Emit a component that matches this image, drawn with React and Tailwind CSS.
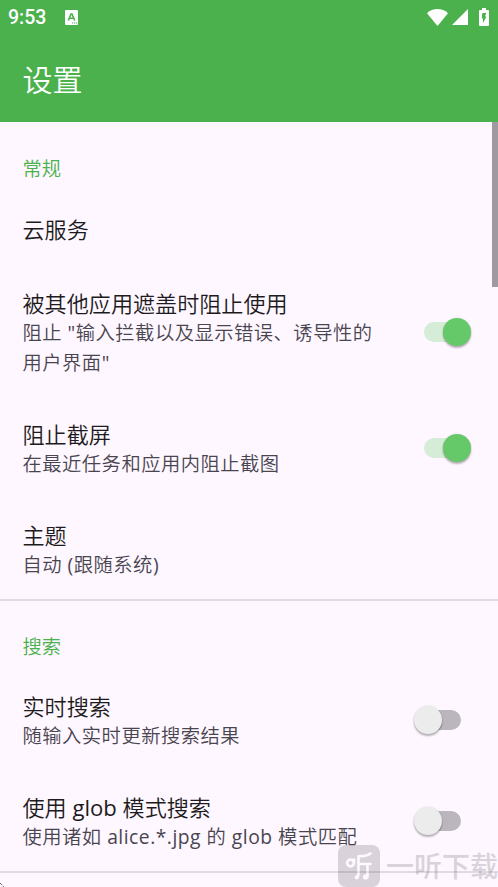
const switchTrackOn = 'bg-[#d5edd7] left-0';
const switchTrackOff = 'bg-[#bbb5bd] right-0';

function Switch({ on }) {
  return (
    <div className={`relative mb-[2px] h-7 w-[47px] shrink-0 ${on ? 'mr-[27px]' : 'mr-[37px]'}`}>
      <div className={`absolute top-1 h-5 w-[37px] rounded-full ${on ? switchTrackOn : switchTrackOff}`} />
      <div
        className={`absolute top-0 size-7 rounded-full shadow-[0_2px_2px_rgba(0,0,0,0.28),0_0_2px_rgba(0,0,0,0.12)] ${
          on ? 'right-0 bg-[#66c969]' : 'left-0 bg-[#ececec]'
        }`}
      />
    </div>
  );
}

// Latin runs take the regular weight beside the slightly lighter Chinese glyphs.
function Mixed({ text }) {
  return text.split(/([\x21-\x7e]+)/).map((part, i) =>
    i % 2 ? (
      <span key={i} className="font-normal">
        {part}
      </span>
    ) : (
      part
    ),
  );
}

function Row({ title, summary, toggle, className = '' }) {
  return (
    <div className={`flex items-center justify-between pl-[22.5px] ${className}`}>
      <div className="whitespace-nowrap">
        <div className="text-[22.1px] leading-[29px] text-[#1d1b20]">
          <Mixed text={title} />
        </div>
        {summary?.map((line, i) => (
          <div
            key={line}
            className={`text-[19.3px] leading-[29px] tracking-[0.5px] text-[#49454f] ${i > 0 ? 'mt-[1px]' : ''}`}
          >
            <Mixed text={line} />
          </div>
        ))}
      </div>
      {toggle !== undefined && <Switch on={toggle} />}
    </div>
  );
}

function Category({ children, className = '' }) {
  return <div className={`pl-[22.5px] text-[19.3px] leading-[28px] text-[#4bb14c] ${className}`}>{children}</div>;
}

function StatusBar() {
  return (
    <div className="flex h-[34px] items-center text-white">
      <span className="ml-[8px] mt-[1px] w-[57px] font-[Roboto] text-[19.5px] font-medium">9:53</span>
      <svg width="13" height="15" viewBox="0 0 13 15">
        <rect width="13" height="15" rx="1" fill="#fff" />
        <path d="M3.300 10.500 6 4h1l2.700 6.500M4.500 8.300h4" fill="none" stroke="#4bb14c" strokeWidth="1.600" />
        <path d="M7 13h1.200M9 13h1.200M11 13h1.200" stroke="#4bb14c" strokeWidth="1" />
      </svg>
      <div className="ml-auto mr-[9px] flex items-center">
        <svg width="21" height="17" viewBox="0 0 21 17">
          <path d="M0 4.2C6-1.4 15-1.4 21 4.2L10.5 17Z" fill="#fff" />
        </svg>
        <svg className="ml-1" width="16" height="16" viewBox="0 0 16 16">
          <path d="M16 0v16H0Z" fill="#fff" />
        </svg>
        <svg className="ml-[11px]" width="10" height="18" viewBox="0 0 10 18">
          <path d="M3 0h4v2h2q1 0 1 1v14q0 1-1 1H1q-1 0-1-1V3q0-1 1-1h2Z" fill="#fff" />
          <path d="M3.3 5h4L6 8.5h1.5L4 15v-4.5H2.8Z" fill="#4bb14c" />
        </svg>
      </div>
    </div>
  );
}

function Watermark() {
  return (
    <div className="absolute left-[338px] top-[845px] flex h-[42px] w-[160px] items-center overflow-hidden opacity-20">
      <svg className="shrink-0" width="42" height="42" viewBox="0 0 42 42">
        <rect width="42" height="42" rx="8" fill="#4b454d" />
        <g fill="none" stroke="#fff" strokeWidth="2.600" strokeLinecap="round" strokeLinejoin="round">
          <circle cx="12.500" cy="18" r="3.400" />
          <path d="M16 14.500v3.500M32.500 8.500c-3 2.500-6.500 2.800-12 2.800v17q0 3-1.500 4.700M20.500 19h12M29.500 19v13" />
        </g>
        <circle cx="18.700" cy="32.300" r="2" fill="#fff" />
        <circle cx="27.500" cy="32" r="2.600" fill="#fff" />
      </svg>
      <span className="ml-[6px] whitespace-nowrap text-[28px] font-medium leading-[42px] text-[#4b454d]">
        一听下载
      </span>
    </div>
  );
}

export default function App() {
  return (
    <div className="relative h-[887px] w-[498px] overflow-hidden bg-[#fef7ff] font-['Open_Sans','Noto_Sans_CJK_SC',sans-serif] font-[350]">
      <header className="h-[122px] bg-[#4bb14c]">
        <StatusBar />
        <h1 className="mt-[24px] pl-[22.5px] text-[30px] leading-[44px] text-white">设置</h1>
      </header>
      <main>
        <Category className="pt-[33px]">常规</Category>
        <Row title="云服务" className="mt-[10px] h-[73px]" />
        <Row
          title="被其他应用遮盖时阻止使用"
          summary={['阻止 "输入拦截以及显示错误、诱导性的', '用户界面"']}
          toggle
          className="mt-[1px] h-[131px]"
        />
        <Row title="阻止截屏" summary={['在最近任务和应用内阻止截图']} toggle className="h-[101px]" />
        <Row title="主题" summary={['自动 (跟随系统)']} className="h-[100px] pt-[2px]" />
        <hr className="h-[2px] border-0 bg-[#e1dae3]" />
        <Category className="pt-[32px]">搜索</Category>
        <Row title="实时搜索" summary={['随输入实时更新搜索结果']} toggle={false} className="mt-[9px] h-[101px]" />
        <Row
          title="使用 glob 模式搜索"
          summary={['使用诸如 alice.*.jpg 的 glob 模式匹配']}
          toggle={false}
          className="h-[100px] pt-[1px]"
        />
        <hr className="h-[2px] border-0 bg-[#e1dae3]" />
      </main>
      <div className="absolute right-0 top-[122px] h-[165px] w-[6px] bg-[#9f9aa1]" />
      <Watermark />
      <svg className="absolute bottom-0 left-0" width="5" height="5" viewBox="0 0 5 5">
        <path d="M0 1 3.500 4.500" stroke="#222" strokeDasharray="1 1" />
      </svg>
    </div>
  );
}
